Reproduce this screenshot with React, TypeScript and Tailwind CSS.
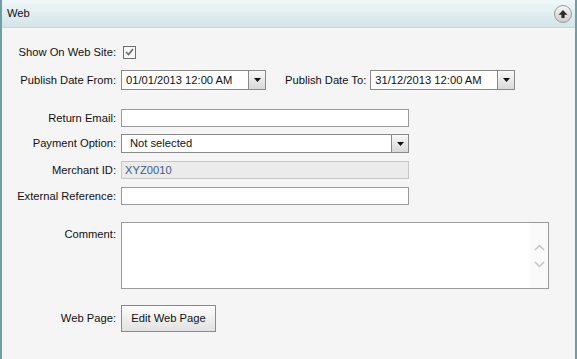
import React from "react";

const DropArrow = () => (
  <div className="w-[17px] h-full flex items-center justify-center border-l border-[#8a8a8a] bg-gradient-to-b from-[#f8f8f8] to-[#d9d9d9]">
    <svg width="7" height="4" viewBox="0 0 7 4">
      <path d="M0 0h7L3.5 4z" fill="#111" />
    </svg>
  </div>
);

const Label = ({ text, top }: { text: string; top?: boolean }) => (
  <div
    className={`w-[115px] shrink-0 text-right pr-[1px] ${top ? "self-start pt-[4px]" : ""}`}
  >
    {text}
  </div>
);

const App = () => {
  return (
    <div className="w-[577px] h-[359px] bg-[#f5f5f5] border-x-2 border-[#6f9ea6] text-[11.2px] text-[#111] flex flex-col font-['Liberation_Sans',Arial,sans-serif]">
      <div className="h-[28px] shrink-0 flex items-center justify-between pl-[5px] pr-[3px] bg-gradient-to-b from-[#f0f7f8] to-[#d3e5e8] border-b border-[#c3d7da]">
        <span>Web</span>
        <div className="w-[18px] h-[18px] rounded-full border border-[#999] bg-gradient-to-b from-[#f6f6f6] to-[#cdcdcd] flex items-center justify-center">
          <svg width="10" height="10" viewBox="0 0 10 10">
            <path d="M5 1L9.5 5.8H6.6V9H3.4V5.8H0.5z" fill="#2a2a2a" />
          </svg>
        </div>
      </div>

      <div className="flex flex-col">
        <div className="mt-[14px] h-[20px] flex items-center gap-[6px]">
          <Label text="Show On Web Site:" />
          <div className="w-[13px] h-[13px] border border-[#6f6f6f] bg-[#f8f8f8] flex items-center justify-center">
            <svg width="9" height="8" viewBox="0 0 9 8">
              <path d="M1 4l2.5 2.5L8 1" stroke="#666" strokeWidth="1.6" fill="none" />
            </svg>
          </div>
        </div>

        <div className="mt-[8px] h-[20px] flex items-center gap-[4px]">
          <Label text="Publish Date From:" />
          <div className="w-[145px] h-[20px] flex border border-[#8a8a8a] bg-white">
            <div className="flex-1 pl-[4px] flex items-center">01/01/2013 12:00 AM</div>
            <DropArrow />
          </div>
          <div className="ml-[15px]">Publish Date To:</div>
          <div className="w-[145px] h-[20px] flex border border-[#8a8a8a] bg-white">
            <div className="flex-1 pl-[4px] flex items-center">31/12/2013 12:00 AM</div>
            <DropArrow />
          </div>
        </div>

        <div className="mt-[19px] h-[18px] flex items-center gap-[4px]">
          <Label text="Return Email:" />
          <div className="w-[288px] h-[18px] border border-[#9a9a9a] bg-white" />
        </div>

        <div className="mt-[7px] h-[19px] flex items-center gap-[4px]">
          <Label text="Payment Option:" />
          <div className="w-[288px] h-[19px] flex border border-[#8a8a8a] bg-white">
            <div className="flex-1 pl-[8px] flex items-center">Not selected</div>
            <DropArrow />
          </div>
        </div>

        <div className="mt-[8px] h-[18px] flex items-center gap-[4px]">
          <Label text="Merchant ID:" />
          <div className="w-[288px] h-[18px] border border-[#c8c8c8] bg-[#ebebeb] pl-[3px] flex items-center text-[#3b5b8c]">
            XYZ0010
          </div>
        </div>

        <div className="mt-[8px] h-[18px] flex items-center gap-[4px]">
          <Label text="External Reference:" />
          <div className="w-[288px] h-[18px] border border-[#9a9a9a] bg-white" />
        </div>

        <div className="mt-[17px] flex gap-[4px]">
          <Label text="Comment:" top />
          <div className="w-[428px] h-[67px] border border-[#9a9a9a] bg-white flex justify-end">
            <div className="w-[18px] h-full bg-[#fafafa] flex flex-col items-center justify-center gap-[10px]">
              <svg width="11" height="7" viewBox="0 0 11 7">
                <path d="M1 6l4.5-4.5L10 6" stroke="#c4c4c4" strokeWidth="1.5" fill="none" />
              </svg>
              <svg width="11" height="7" viewBox="0 0 11 7">
                <path d="M1 1l4.5 4.5L10 1" stroke="#c4c4c4" strokeWidth="1.5" fill="none" />
              </svg>
            </div>
          </div>
        </div>

        <div className="mt-[16px] h-[27px] flex items-center gap-[4px]">
          <Label text="Web Page:" />
          <button className="w-[95px] h-[27px] border border-[#8a8a8a] bg-gradient-to-b from-[#fcfcfc] to-[#e2e2e2] text-[11.2px] text-[#111]">
            Edit Web Page
          </button>
        </div>
      </div>
    </div>
  );
};

export default App;
